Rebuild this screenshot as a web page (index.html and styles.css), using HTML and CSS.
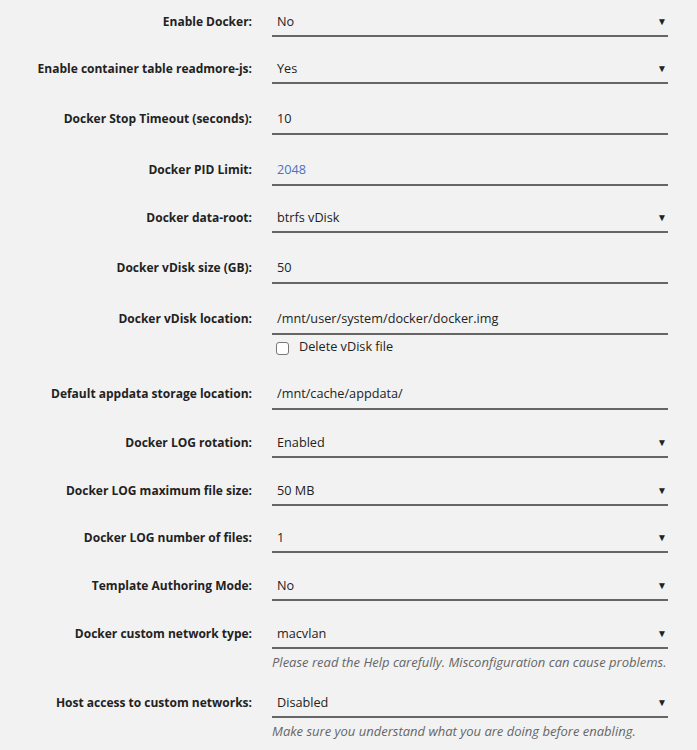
FILE: index.html
```html
<!DOCTYPE html>
<html>
<head>
  <title>Docker Settings</title>
  <link rel="stylesheet" href="styles.css">
</head>
<body>
  <div class="settings">
    <div class="setting-row">
      <label class="setting-label">Enable Docker:</label>
      <div class="setting-field"><div class="select-box">No</div></div>
    </div>
    <div class="setting-row">
      <label class="setting-label">Enable container table readmore-js:</label>
      <div class="setting-field"><div class="select-box">Yes</div></div>
    </div>
    <div class="setting-row">
      <label class="setting-label">Docker Stop Timeout (seconds):</label>
      <div class="setting-field"><div class="text-box">10</div></div>
    </div>
    <div class="setting-row">
      <label class="setting-label">Docker PID Limit:</label>
      <div class="setting-field"><div class="text-box placeholder">2048</div></div>
    </div>
    <div class="setting-row">
      <label class="setting-label">Docker data-root:</label>
      <div class="setting-field"><div class="select-box">btrfs vDisk</div></div>
    </div>
    <div class="setting-row">
      <label class="setting-label">Docker vDisk size (GB):</label>
      <div class="setting-field"><div class="text-box">50</div></div>
    </div>
    <div class="setting-row">
      <label class="setting-label">Docker vDisk location:</label>
      <div class="setting-field">
        <div class="text-box">/mnt/user/system/docker/docker.img</div>
        <div class="check-line"><span class="check-box"></span>Delete vDisk file</div>
      </div>
    </div>
    <div class="setting-row">
      <label class="setting-label">Default appdata storage location:</label>
      <div class="setting-field"><div class="text-box">/mnt/cache/appdata/</div></div>
    </div>
    <div class="setting-row">
      <label class="setting-label">Docker LOG rotation:</label>
      <div class="setting-field"><div class="select-box">Enabled</div></div>
    </div>
    <div class="setting-row">
      <label class="setting-label">Docker LOG maximum file size:</label>
      <div class="setting-field"><div class="select-box">50 MB</div></div>
    </div>
    <div class="setting-row">
      <label class="setting-label">Docker LOG number of files:</label>
      <div class="setting-field"><div class="select-box">1</div></div>
    </div>
    <div class="setting-row">
      <label class="setting-label">Template Authoring Mode:</label>
      <div class="setting-field"><div class="select-box">No</div></div>
    </div>
    <div class="setting-row">
      <label class="setting-label">Docker custom network type:</label>
      <div class="setting-field">
        <div class="select-box">macvlan</div>
        <p class="field-note">Please read the Help carefully. Misconfiguration can cause problems.</p>
      </div>
    </div>
    <div class="setting-row">
      <label class="setting-label">Host access to custom networks:</label>
      <div class="setting-field">
        <div class="select-box">Disabled</div>
        <p class="field-note">Make sure you understand what you are doing before enabling.</p>
      </div>
    </div>
  </div>
</body>
</html>
```

FILE: styles.css
```css
body {
  margin: 0;
  background-color: #f2f2f2;
  font-family: 'Open Sans', sans-serif;
  font-size: 12.7px;
  color: #222;
}

.settings {
  padding-top: 7.5px;
}

.setting-row {
  display: grid;
  grid-template-columns: 252px 396px;
  column-gap: 20px;
  align-items: baseline;
  margin-bottom: 18.7px;
}

.setting-label {
  text-align: right;
  font-weight: bold;
  font-size: 12px;
  color: #222;
}

.text-box,
.select-box {
  padding-left: 5px;
  border-bottom: 2px solid #666;
  position: relative;
}

.text-box {
  height: 30px;
  line-height: 30px;
}

.select-box {
  height: 27px;
  line-height: 27px;
}

.select-box::after {
  content: "\25BC";
  position: absolute;
  right: 1px;
  top: 0;
  font-size: 10px;
}

.placeholder {
  color: #4f6fc2;
}

.check-line {
  display: flex;
  align-items: center;
  padding-left: 4px;
  margin-top: 1px;
  height: 21px;
  padding-bottom: 3px;
}

.check-box {
  width: 11px;
  height: 11px;
  border: 1px solid #777;
  border-radius: 3px;
  background: #fff;
  margin: 5px 10px 0 0;
}

.field-note {
  margin: 4px 0 0;
  line-height: 18px;
  font-style: italic;
  font-size: 13px;
  color: #666;
}
```
